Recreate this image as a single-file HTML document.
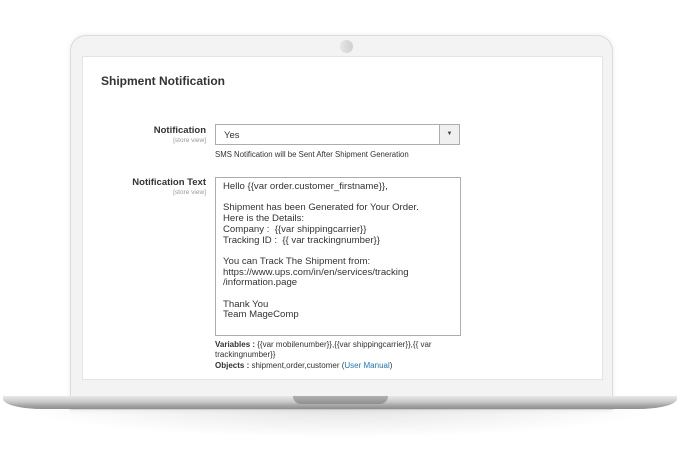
<!DOCTYPE html>
<html><head><meta charset="utf-8"><style>
*{margin:0;padding:0;box-sizing:border-box}
body{width:680px;height:450px;background:#fff;position:relative;overflow:hidden;font-family:"Liberation Sans",sans-serif;color:#333}
.lid{position:absolute;left:70px;top:35px;width:543px;height:375px;background:#f3f3f3;border-radius:16px 16px 0 0;border:1px solid #dcdcdc;box-shadow:0 0 6px rgba(0,0,0,.08)}
.cam{position:absolute;left:340px;top:40px;width:13px;height:13px;border-radius:50%;background:linear-gradient(90deg,#e6e6e6,#cfcfcf)}
.screen{position:absolute;left:82px;top:56px;width:521px;height:324px;background:#fff;border:1px solid #e4e4e4}
.t{position:absolute;white-space:nowrap}
.title{left:101px;top:74px;font-size:12px;font-weight:bold;color:#333}
.lbl{font-size:9.5px;font-weight:bold;text-align:right;right:474px}
.sv{font-size:6.5px;color:#999;text-align:right;right:474px}
.sel{position:absolute;left:215px;top:124px;width:245px;height:21px;border:1px solid #adadad;background:#fff;font-size:9.5px;padding:5px 8px}
.arr{position:absolute;right:0;top:0;width:20px;height:19px;border-left:1px solid #adadad;background:#f0f0f0;font-size:6px;text-align:center;line-height:19px;color:#444}
.ta{position:absolute;left:215px;top:177px;width:246px;height:159px;border:1px solid #adadad;background:#fff;font-size:9.6px;line-height:10.7px;padding:4px 7px;white-space:pre;color:#333}
.small{font-size:8px;color:#333}
.base{position:absolute;left:3px;top:396px;width:674px;height:13px;background:linear-gradient(180deg,#e9e9e9 0%,#c9c9c9 45%,#a9a9a9 70%,#8d8d8d 100%);border-radius:0 0 40px 40px/0 0 10px 10px}
.notch{position:absolute;left:293px;top:396px;width:95px;height:8px;background:linear-gradient(180deg,#b0b0b0,#8f8f8f);border-radius:0 0 8px 8px}
.shadow{position:absolute;left:20px;top:408px;width:640px;height:30px;background:radial-gradient(ellipse at center top,rgba(0,0,0,.1),rgba(0,0,0,0) 70%)}
</style></head><body>
<div class="lid"></div>
<div class="cam"></div>
<div class="screen"></div>
<div class="t title">Shipment Notification</div>
<div class="t lbl" style="top:125px">Notification</div>
<div class="t sv" style="top:137px">[store view]</div>
<div class="sel">Yes<div class="arr">▼</div></div>
<div class="t small" style="left:215px;top:150px;font-size:7.8px">SMS Notification will be Sent After Shipment Generation</div>
<div class="t lbl" style="top:177px">Notification Text</div>
<div class="t sv" style="top:189px">[store view]</div>
<div class="ta">Hello {{var order.customer_firstname}},

Shipment has been Generated for Your Order.
Here is the Details:
Company :  {{var shippingcarrier}}
Tracking ID :  {{ var trackingnumber}}

You can Track The Shipment from:
https://www.ups.com/in/en/services/tracking
/information.page

Thank You
Team MageComp</div>
<div class="t small" style="left:215px;top:340px"><b>Variables :</b> {{var mobilenumber}},{{var shippingcarrier}},{{ var</div>
<div class="t small" style="left:215px;top:350px">trackingnumber}}</div>
<div class="t small" style="left:215px;top:361px"><b>Objects :</b> shipment,order,customer (<span style="color:#1979c3">User Manual</span>)</div>
<div class="shadow"></div>
<div class="base"></div>
<div class="notch"></div>
</body></html>
